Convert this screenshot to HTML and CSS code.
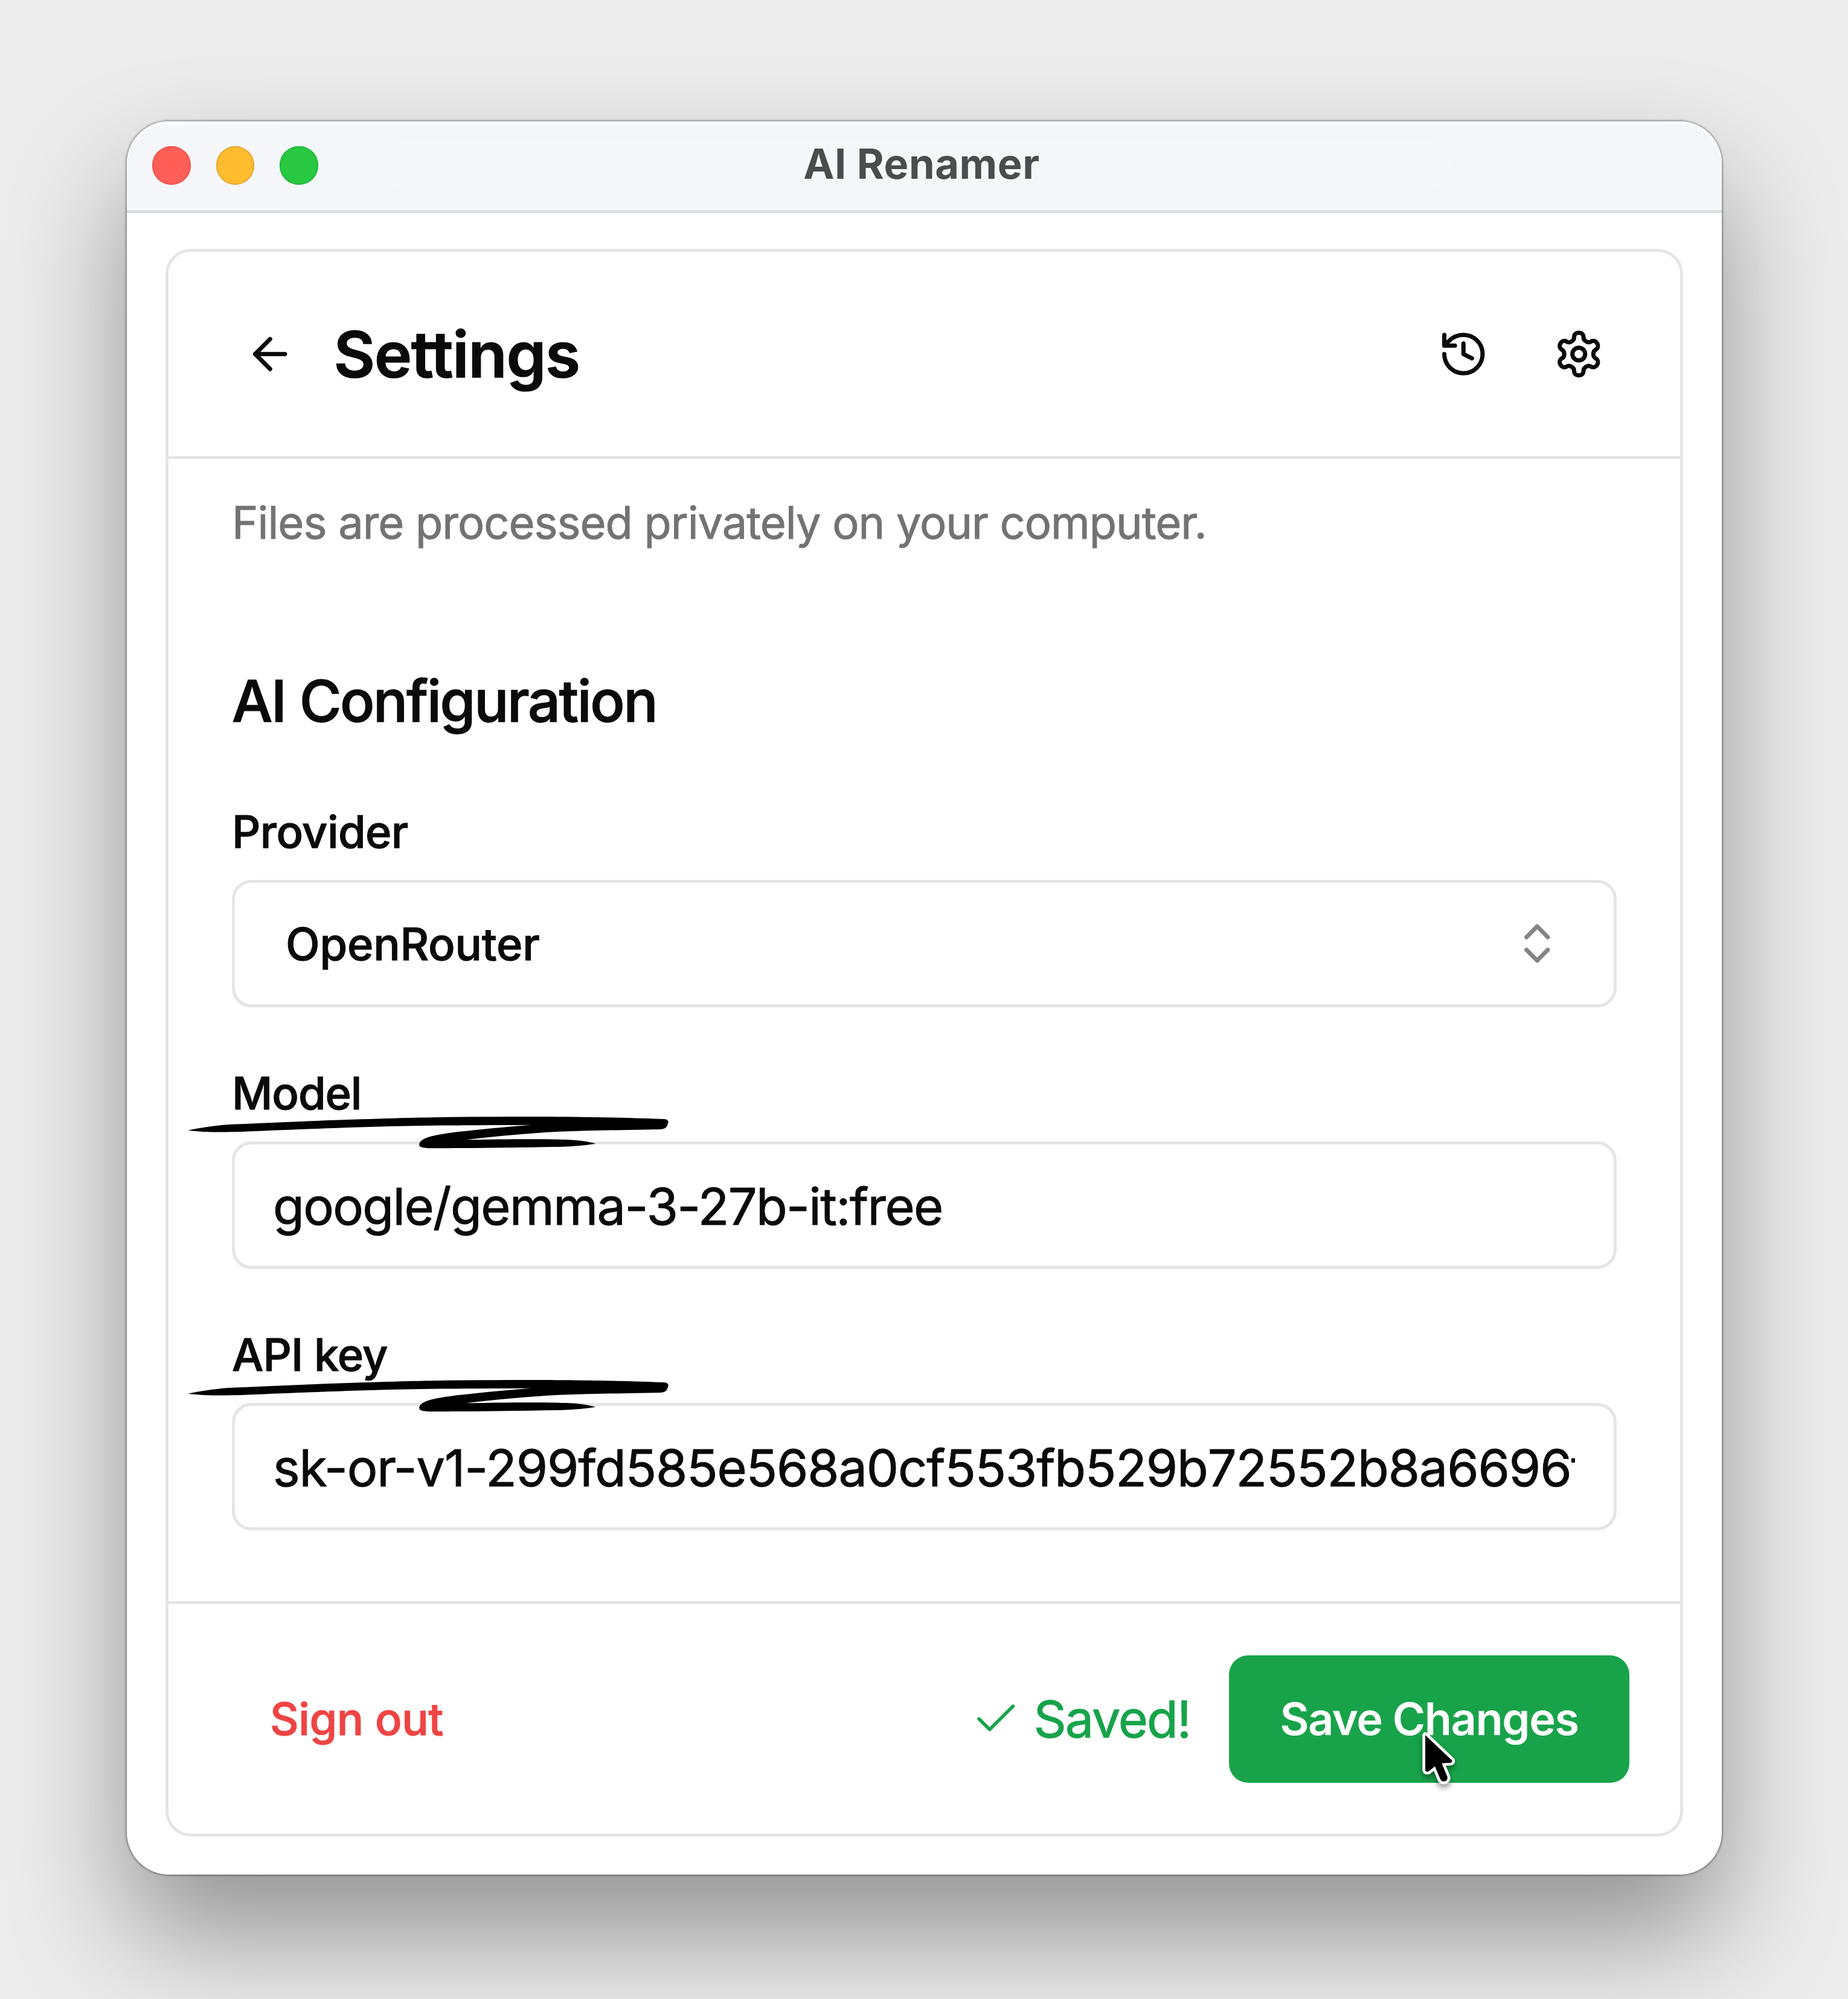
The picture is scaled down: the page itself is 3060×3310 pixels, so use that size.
FILE: index.html
```html
<!DOCTYPE html>
<html lang="en">
<head>
<meta charset="utf-8">
<title>AI Renamer</title>
<link rel="stylesheet" href="styles.css">
</head>
<body>
<main class="window">
  <header class="titlebar">
    <div class="lights">
      <span class="light light-close"></span>
      <span class="light light-min"></span>
      <span class="light light-zoom"></span>
    </div>
    <div class="window-title">AI Renamer</div>
  </header>
  <section class="card">
    <div class="card-header">
      <svg class="icon" viewBox="0 0 24 24"><path d="m12 19-7-7 7-7"/><path d="M19 12H5"/></svg>
      <h1 class="page-title">Settings</h1>
      <div class="header-actions">
        <svg class="icon" viewBox="0 0 24 24"><path d="M3 12a9 9 0 1 0 9-9 9.75 9.75 0 0 0-6.74 2.74L3 8"/><path d="M3 3v5h5"/><path d="M12 7v5l4 2"/></svg>
        <svg class="icon" viewBox="0 0 24 24"><path d="M12.22 2h-.44a2 2 0 0 0-2 2v.18a2 2 0 0 1-1 1.73l-.43.25a2 2 0 0 1-2 0l-.15-.08a2 2 0 0 0-2.73.73l-.22.38a2 2 0 0 0 .73 2.73l.15.1a2 2 0 0 1 1 1.72v.51a2 2 0 0 1-1 1.74l-.15.09a2 2 0 0 0-.73 2.73l.22.38a2 2 0 0 0 2.73.73l.15-.08a2 2 0 0 1 2 0l.43.25a2 2 0 0 1 1 1.73V20a2 2 0 0 0 2 2h.44a2 2 0 0 0 2-2v-.18a2 2 0 0 1 1-1.73l.43-.25a2 2 0 0 1 2 0l.15.08a2 2 0 0 0 2.73-.73l.22-.39a2 2 0 0 0-.73-2.73l-.15-.08a2 2 0 0 1-1-1.74v-.5a2 2 0 0 1 1-1.74l.15-.09a2 2 0 0 0 .73-2.73l-.22-.38a2 2 0 0 0-2.73-.73l-.15.08a2 2 0 0 1-2 0l-.43-.25a2 2 0 0 1-1-1.73V4a2 2 0 0 0-2-2z"/><circle cx="12" cy="12" r="3"/></svg>
      </div>
    </div>
    <div class="card-body">
      <p class="note">Files are processed privately on your computer.</p>
      <h2 class="section-title">AI Configuration</h2>
      <div class="field">
        <div class="label label-provider">Provider</div>
        <div class="select">
          <span>OpenRouter</span>
          <svg class="icon icon-muted" viewBox="0 0 24 24"><path d="m7 15 5 5 5-5"/><path d="m7 9 5-5 5 5"/></svg>
        </div>
      </div>
      <div class="field">
        <label class="label label-model" for="model">Model</label>
        <input class="input input-model" id="model" value="google/gemma-3-27b-it:free">
        <svg class="scribble scribble-model" viewBox="16 202 1392 162" preserveAspectRatio="none"><path d="M18 273C50 262 90 250 130 245C300 230 600 212 720 209C900 203 1100 204 1200 208C1280 210 1350 214 1392 217C1404 219 1406 230 1402 243C1400 258 1394 267 1380 268C1280 271 1180 274 1090 279C1000 287 900 303 820 320C930 316 1050 315 1110 319C1150 322 1175 330 1194 339C1170 346 1140 352 1080 355C960 359 800 362 720 362C700 361 688 358 686 349C683 335 690 318 715 305C750 286 880 263 1008 246C860 247 700 249 600 253C450 260 280 272 170 280C110 283 60 282 18 273Z"/></svg>
      </div>
      <div class="field">
        <label class="label label-key" for="key">API key</label>
        <input class="input input-key" id="key" value="sk-or-v1-299fd585e568a0cf553fb529b72552b8a6696f">
        <svg class="scribble scribble-key" viewBox="16 202 1392 162" preserveAspectRatio="none"><path d="M18 273C50 262 90 250 130 245C300 230 600 212 720 209C900 203 1100 204 1200 208C1280 210 1350 214 1392 217C1404 219 1406 230 1402 243C1400 258 1394 267 1380 268C1280 271 1180 274 1090 279C1000 287 900 303 820 320C930 316 1050 315 1110 319C1150 322 1175 330 1194 339C1170 346 1140 352 1080 355C960 359 800 362 720 362C700 361 688 358 686 349C683 335 690 318 715 305C750 286 880 263 1008 246C860 247 700 249 600 253C450 260 280 272 170 280C110 283 60 282 18 273Z"/></svg>
      </div>
    </div>
    <div class="card-footer">
      <div class="sign-out">Sign out</div>
      <div class="saved">
        <svg class="icon icon-check" viewBox="0 0 24 24"><path d="M20 6 9 17l-5-5"/></svg>
        <span>Saved!</span>
      </div>
      <div class="save">
        <span>Save Changes</span>
        <svg class="cursor" viewBox="150 150 200 320"><path d="M180 186L313 312Q315 322 306 323L262 326L290 394Q293 408 280 415Q264 420 256 408L228 341L196 367Q182 370 180 360Z"/></svg>
      </div>
    </div>
  </section>
</main>
</body>
</html>
```
FILE: styles.css
```css
* { box-sizing: border-box; margin: 0; }

body {
  height: 3310px;
  overflow: hidden;
  display: flex;
  align-items: flex-start;
  padding: 201px 0 0 210px;
  background: #ececec;
  color: #0a0a0a;
  font-family: Inter, "Liberation Sans", sans-serif;
}

.window {
  width: 2641px;
  height: 2903px;
  border-radius: 70px;
  background: #fff;
  box-shadow: 0 0 3px 2px rgba(0, 0, 0, .32), 0 100px 190px rgba(0, 0, 0, .38);
}

.titlebar {
  display: grid;
  grid-template-columns: 422px 1770px 1fr;
  align-items: center;
  height: 152px;
  padding-bottom: 1px;
  border-bottom: 5px solid #dcdddf;
  border-radius: 70px 70px 0 0;
  background: linear-gradient(90deg, #f5f7fb 255px, #f3f7fa 255px);
  box-shadow: inset 0 4px 2px #fff;
}

.lights { display: flex; gap: 42px; padding-left: 42px; }
.light { width: 63.5px; height: 63.5px; border-radius: 50%; }
.light-close { background: #ff5f57; box-shadow: inset 0 0 0 2px #ec5650; }
.light-min { background: #febc2e; box-shadow: inset 0 0 0 2px #e5a836; }
.light-zoom { background: #28c840; box-shadow: inset 0 0 0 2px #24b73c; }

.window-title {
  height: 88px;
  padding-left: 18px;
  border-radius: 44px;
  background: #f5f7fb;
  color: #4b4c4c;
  font-size: 68.6px;
  font-weight: 700;
  line-height: 83px;
  letter-spacing: .57px;
  text-align: center;
}

.card {
  display: flex;
  flex-direction: column;
  width: 2513px;
  height: 2629px;
  margin: 59px 0 0 64px;
  border: 5px solid #e5e5e5;
  border-radius: 42px;
}

.icon {
  flex: none;
  width: 84.5px;
  height: 84.5px;
  fill: none;
  stroke: currentColor;
  stroke-width: 2;
  stroke-linecap: round;
  stroke-linejoin: round;
}

.card-header {
  display: flex;
  align-items: center;
  height: 343px;
  padding: 0 126px;
  border-bottom: 5px solid #e5e5e5;
}
.page-title {
  margin: 2px 0 0 63px;
  font-size: 105.6px;
  font-weight: 600;
  line-height: 148px;
  letter-spacing: -1.45px;
  -webkit-text-stroke: 1.2px currentColor;
}
.header-actions { display: flex; gap: 106px; margin-left: auto; }

.card-body { flex: 1; padding: 52px 105px 0; }
.note {
  color: #737373;
  font-size: 73.92px;
  line-height: 106px;
  letter-spacing: -1.02px;
  -webkit-text-stroke: .9px currentColor;
}
.section-title {
  margin: 169px 0 105px;
  font-size: 95px;
  font-weight: 500;
  line-height: 148px;
  letter-spacing: -2.3px;
  -webkit-text-stroke: 1.4px currentColor;
}

.field { position: relative; }
.field + .field { margin-top: 105px; }
.label {
  display: block;
  margin-bottom: 43px;
  font-size: 73.92px;
  font-weight: 500;
  line-height: 74px;
  -webkit-text-stroke: 1px currentColor;
}
.label-provider { letter-spacing: -.6px; }
.label-model { letter-spacing: -1.1px; }
.label-key { letter-spacing: -.9px; }

.select, .input {
  display: flex;
  align-items: center;
  width: 100%;
  height: 211px;
  border: 5px solid #e5e5e5;
  border-radius: 32px;
  background: #fff;
  color: #0a0a0a;
}
.select {
  justify-content: space-between;
  padding: 0 85px 0 84px;
  font-size: 73.92px;
  font-weight: 500;
  letter-spacing: -.2px;
}
.select span { -webkit-text-stroke: 1px currentColor; }
.icon-muted { color: #858585; }
.input {
  padding: 2px 64px 0 63px;
  outline: none;
  font-family: inherit;
  font-size: 84.48px;
  font-weight: 400;
  -webkit-text-stroke: 1px currentColor;
}
.input-model { letter-spacing: -1.59px; }
.input-key { letter-spacing: -1.06px; }

.scribble {
  position: absolute;
  left: -74.5px;
  width: 799px;
  height: 54px;
  fill: #000;
}
.scribble-model { top: 74.5px; }
.scribble-key { top: 77.5px; }

.card-footer {
  display: flex;
  align-items: center;
  height: 385px;
  padding: 0 84px 0 168px;
  border-top: 5px solid #e5e5e5;
}
.sign-out {
  padding-bottom: 1px;
  color: #ef4444;
  font-size: 73.92px;
  font-weight: 500;
  letter-spacing: -.45px;
  -webkit-text-stroke: 1px currentColor;
}
.saved {
  display: flex;
  align-items: center;
  gap: 20px;
  margin-left: auto;
  padding-right: 64px;
  color: #18a34a;
  font-size: 84.48px;
  letter-spacing: -2px;
}
.saved span { -webkit-text-stroke: 1px currentColor; }
.icon-check { stroke-width: 1.6; }
.save {
  position: relative;
  display: flex;
  align-items: center;
  justify-content: center;
  width: 663px;
  height: 211px;
  border-radius: 32px;
  background: #18a34a;
  color: #fff;
  font-size: 73.92px;
  font-weight: 600;
  letter-spacing: -1.45px;
}
.save span { padding-bottom: 1px; }
.cursor {
  position: absolute;
  left: 315px;
  top: 120px;
  width: 66.7px;
  height: 106.7px;
  overflow: visible;
  fill: #000;
  stroke: #fff;
  stroke-width: 28;
  stroke-linejoin: round;
  paint-order: stroke;
  filter: drop-shadow(0 6px 5px rgba(0, 0, 0, .4));
}
```
